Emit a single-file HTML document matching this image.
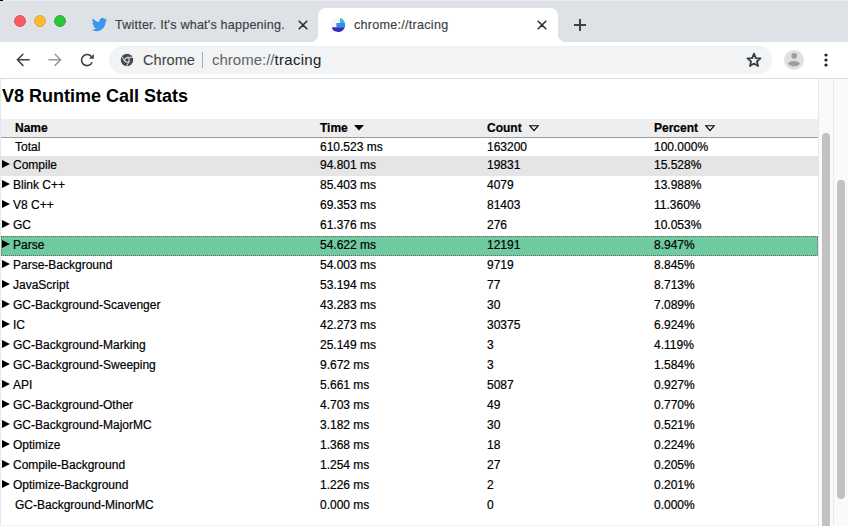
<!DOCTYPE html>
<html><head><meta charset="utf-8">
<style>
*{box-sizing:border-box}
html,body{margin:0;padding:0;width:848px;height:526px;overflow:hidden;background:#fff;font-family:"Liberation Sans",sans-serif}
.abs{position:absolute}
#strip{position:absolute;left:0;top:0;width:848px;height:42px;background:#dee1e6}
.light{position:absolute;width:12px;height:12px;border-radius:50%}
#tab{position:absolute;left:318px;top:8px;width:240px;height:34px;background:#fff;border-radius:8px 8px 0 0}
#tab:before,#tab:after{content:"";position:absolute;bottom:0;width:8px;height:8px}
#tab:before{left:-8px;background:radial-gradient(circle at 0 0,#dee1e6 8px,#fff 8.5px)}
#tab:after{right:-8px;background:radial-gradient(circle at 100% 0,#dee1e6 8px,#fff 8.5px)}
.tabtitle{position:absolute;font-size:12px;color:#3c4043;white-space:nowrap;line-height:14px;-webkit-text-stroke:0.15px #3c4043}
#toolbar{position:absolute;left:0;top:42px;width:848px;height:36px;background:#fff}
#tbline{position:absolute;left:0;top:78px;width:848px;height:1px;background:#dadce0}
#omni{position:absolute;left:109px;top:46px;width:663px;height:28px;border-radius:14px;background:#f1f3f4}
#content{position:absolute;left:0;top:79px;width:848px;height:447px;background:#fff;overflow:hidden}
#lborder{position:absolute;left:0;top:79px;width:1px;height:447px;background:#e6e6e6}
h1{position:absolute;left:2px;top:0;margin:0;font-size:18px;font-weight:bold;line-height:20px;color:#000}
.hdr{position:absolute;left:1px;top:40px;width:817px;height:19px;background:#eeeeee;border-bottom:1px solid #9c9c9c}
.row{position:absolute;left:1px;width:817px;height:20px}
.c{position:absolute;top:0;font-size:12px;line-height:18px;color:#000;white-space:nowrap;-webkit-text-stroke:0.2px #000}
.tri{position:absolute;left:0.5px;top:4px;width:0;height:0;border-top:4px solid transparent;border-bottom:4px solid transparent;border-left:8px solid #000}
.hov{background:#e5e5e5}
.sel{background:#6fcaa0;outline:1px dotted #6a6a6a;outline-offset:-1px}
.sb{position:absolute;top:79px;height:447px;background:#fafafa;border-left:1px solid #e8e8e8}
.thumb{position:absolute;width:8px;background:#c1c1c1;border-radius:4px}
</style></head><body>
<div id="strip"></div>
<div class="abs" style="left:0;top:0;width:848px;height:1px;background:#e9eaee"></div>
<div class="abs" style="left:0;top:0;width:3px;height:1px;background:#000"></div>
<div class="light" style="left:14px;top:15px;background:#f95c61;border:0.5px solid #e5484f;box-shadow:0 0 0 1px #dff0f5"></div>
<div class="light" style="left:34px;top:15px;background:#fbbd2e;border:0.5px solid #e0a226;box-shadow:0 0 0 1px #e2e8f5"></div>
<div class="light" style="left:54px;top:15px;background:#2ac63b;border:0.5px solid #1fae2e;box-shadow:0 0 0 1px #f0e4f2"></div>

<!-- inactive tab -->
<svg class="abs" style="left:91.5px;top:18.3px" width="15.5" height="13.5" viewBox="0 0 24 20" preserveAspectRatio="none"><path fill="#3a95ee" d="M23.6 2.4c-.9.4-1.8.6-2.8.8 1-.6 1.8-1.6 2.1-2.7-.9.6-2 1-3.1 1.2C18.9.6 17.6 0 16.2 0c-2.7 0-4.9 2.2-4.9 4.9 0 .4 0 .8.1 1.1C7.3 5.8 3.7 3.9 1.3.9.9 1.6.6 2.5.6 3.4c0 1.7.9 3.2 2.2 4.1-.8 0-1.6-.2-2.2-.6v.1c0 2.4 1.7 4.4 3.9 4.8-.4.1-.8.2-1.3.2-.3 0-.6 0-.9-.1.6 2 2.4 3.4 4.6 3.4-1.7 1.3-3.8 2.1-6.1 2.1-.4 0-.8 0-1.2-.1 2.2 1.4 4.8 2.2 7.5 2.2 9.1 0 14-7.5 14-14v-.6c1-.7 1.8-1.6 2.5-2.5z"/></svg>
<div class="tabtitle" style="left:115px;top:18px;font-size:12.6px;letter-spacing:0.2px">Twitter. It's what's happening.</div>
<svg class="abs" style="left:297px;top:19px" width="12" height="12" viewBox="0 0 12 12"><path d="M2.2 2.2L9.8 9.8M9.8 2.2L2.2 9.8" stroke="#2e3034" stroke-width="1.6" stroke-linecap="round"/></svg>

<!-- active tab -->
<div id="tab"></div>
<svg class="abs" style="left:330px;top:17px" width="16" height="16" viewBox="0 0 16 16">
<circle cx="8" cy="8" r="7.3" fill="#f5f5f7"/>
<path d="M10 1.1A7.2 7.2 0 0 1 14.9 6H10Z" fill="#27c3d9"/>
<path d="M6.4 6H14.9A7.2 7.2 0 0 1 14.8 10.2H6.4Z" fill="#3b86ef"/>
<path d="M2.3 10.2H14.8A7.2 7.2 0 0 1 2.3 12.2Z" fill="#3030b4"/>
</svg>
<div class="tabtitle" style="left:354px;top:18px;font-size:12.6px;letter-spacing:0.26px">chrome://tracing</div>
<svg class="abs" style="left:536px;top:19px" width="12" height="12" viewBox="0 0 12 12"><path d="M2.2 2.2L9.8 9.8M9.8 2.2L2.2 9.8" stroke="#2e3034" stroke-width="1.6" stroke-linecap="round"/></svg>
<svg class="abs" style="left:573px;top:18px" width="14" height="14" viewBox="0 0 14 14"><path d="M7 1V13M1 7H13" stroke="#3c4043" stroke-width="2"/></svg>

<!-- toolbar -->
<div id="toolbar"></div>
<div id="tbline"></div>
<svg class="abs" style="left:15px;top:52px" width="16" height="16" viewBox="0 0 16 16"><path d="M14.2 7.8H2.6M7.9 2.2L2.4 7.8L7.9 13.4" fill="none" stroke="#3c4043" stroke-width="1.5" stroke-linecap="round"/></svg>
<svg class="abs" style="left:47px;top:52px" width="16" height="16" viewBox="0 0 16 16"><path d="M2 7.8H13.5M8.1 2.2L13.6 7.8L8.1 13.4" fill="none" stroke="#9a9a9a" stroke-width="1.5" stroke-linecap="round"/></svg>
<svg class="abs" style="left:79px;top:52px" width="16" height="16" viewBox="0 0 16 16"><path d="M13.1 10.2A5.5 5.5 0 1 1 12.3 4.6" fill="none" stroke="#3c4043" stroke-width="1.6"/><path d="M14.8 1.9V6.7H10Z" fill="#3c4043"/></svg>

<div id="omni"></div>
<svg class="abs" style="left:120px;top:53px" width="14" height="14" viewBox="0 0 14 14">
<circle cx="7" cy="7" r="6.2" fill="#45484c"/>
<circle cx="7" cy="7" r="2.7" fill="#f1f3f4"/>
<circle cx="7" cy="7" r="1.8" fill="#45484c"/>
<path d="M7 4.3H12.8M4.7 8.4L1.8 3.4M9.3 8.4L6.4 13.3" stroke="#f1f3f4" stroke-width="0.9"/>
</svg>
<div class="abs" style="left:143px;top:51px;font-size:14.6px;line-height:18px;color:#3c4043">Chrome</div>
<div class="abs" style="left:202px;top:52px;width:1px;height:16px;background:#a8abaf"></div>
<div class="abs" style="left:212px;top:51px;font-size:15px;line-height:18px;color:#5f6368;white-space:nowrap">chrome://<span style="color:#202124;letter-spacing:0.3px">tracing</span></div>
<svg class="abs" style="left:746px;top:52px" width="16" height="16" viewBox="0 0 24 24"><path d="M12 2.5l2.7 6.6 7.1.5-5.4 4.6 1.7 6.9L12 17.4l-6.1 3.7 1.7-6.9-5.4-4.6 7.1-.5z" fill="none" stroke="#3c4043" stroke-width="2.7" stroke-linejoin="round"/></svg>
<svg class="abs" style="left:784px;top:50px" width="20" height="20" viewBox="0 0 20 20"><circle cx="10" cy="10" r="10" fill="#e0e0e0"/><circle cx="10.2" cy="5.8" r="2.9" fill="#9e9e9e"/><path d="M3.9 13.4C6.2 10.1 13.8 10.1 16.1 13.4C13.8 17.4 6.2 17.4 3.9 13.4Z" fill="#9e9e9e"/></svg>
<svg class="abs" style="left:822px;top:52px" width="8" height="16" viewBox="0 0 8 16"><circle cx="4" cy="3" r="1.6" fill="#202124"/><circle cx="4" cy="8" r="1.6" fill="#202124"/><circle cx="4" cy="13" r="1.6" fill="#202124"/></svg>

<!-- content -->
<div id="content">
<h1 style="top:7px">V8 Runtime Call Stats</h1>
<div class="hdr">
  <div class="c" style="left:14px;font-weight:bold">Name</div>
  <div class="c" style="left:319px;font-weight:bold">Time</div>
  <svg class="abs" style="left:353px;top:6px" width="10" height="6" viewBox="0 0 10 6"><path d="M0 0H10L5 5.5Z" fill="#000"/></svg>
  <div class="c" style="left:486px;font-weight:bold">Count</div>
  <svg class="abs" style="left:527.5px;top:5.5px" width="10" height="7" viewBox="0 0 10 7"><path d="M0.7 0.7H9.3L5 5.6Z" fill="none" stroke="#000" stroke-width="1.1" stroke-linejoin="miter"/></svg>
  <div class="c" style="left:653px;font-weight:bold">Percent</div>
  <svg class="abs" style="left:703.5px;top:5.5px" width="10" height="7" viewBox="0 0 10 7"><path d="M0.7 0.7H9.3L5 5.6Z" fill="none" stroke="#000" stroke-width="1.1" stroke-linejoin="miter"/></svg>
</div>
<div class="row" style="top:59px;height:18px"><div class="c" style="left:14px">Total</div><div class="c" style="left:319px">610.523 ms</div><div class="c" style="left:486px">163200</div><div class="c" style="left:653px">100.000%</div></div>
<div class="row hov" style="top:77px;height:20px"><div class="tri"></div><div class="c" style="left:12px">Compile</div><div class="c" style="left:319px">94.801 ms</div><div class="c" style="left:486px">19831</div><div class="c" style="left:653px">15.528%</div></div>
<div class="row" style="top:97px;height:20px"><div class="tri"></div><div class="c" style="left:12px">Blink C++</div><div class="c" style="left:319px">85.403 ms</div><div class="c" style="left:486px">4079</div><div class="c" style="left:653px">13.988%</div></div>
<div class="row" style="top:117px;height:20px"><div class="tri"></div><div class="c" style="left:12px">V8 C++</div><div class="c" style="left:319px">69.353 ms</div><div class="c" style="left:486px">81403</div><div class="c" style="left:653px">11.360%</div></div>
<div class="row" style="top:137px;height:20px"><div class="tri"></div><div class="c" style="left:12px">GC</div><div class="c" style="left:319px">61.376 ms</div><div class="c" style="left:486px">276</div><div class="c" style="left:653px">10.053%</div></div>
<div class="row sel" style="top:157px;height:20px"><div class="tri"></div><div class="c" style="left:12px">Parse</div><div class="c" style="left:319px">54.622 ms</div><div class="c" style="left:486px">12191</div><div class="c" style="left:653px">8.947%</div></div>
<div class="row" style="top:177px;height:20px"><div class="tri"></div><div class="c" style="left:12px">Parse-Background</div><div class="c" style="left:319px">54.003 ms</div><div class="c" style="left:486px">9719</div><div class="c" style="left:653px">8.845%</div></div>
<div class="row" style="top:197px;height:20px"><div class="tri"></div><div class="c" style="left:12px">JavaScript</div><div class="c" style="left:319px">53.194 ms</div><div class="c" style="left:486px">77</div><div class="c" style="left:653px">8.713%</div></div>
<div class="row" style="top:217px;height:20px"><div class="tri"></div><div class="c" style="left:12px">GC-Background-Scavenger</div><div class="c" style="left:319px">43.283 ms</div><div class="c" style="left:486px">30</div><div class="c" style="left:653px">7.089%</div></div>
<div class="row" style="top:237px;height:20px"><div class="tri"></div><div class="c" style="left:12px">IC</div><div class="c" style="left:319px">42.273 ms</div><div class="c" style="left:486px">30375</div><div class="c" style="left:653px">6.924%</div></div>
<div class="row" style="top:257px;height:20px"><div class="tri"></div><div class="c" style="left:12px">GC-Background-Marking</div><div class="c" style="left:319px">25.149 ms</div><div class="c" style="left:486px">3</div><div class="c" style="left:653px">4.119%</div></div>
<div class="row" style="top:277px;height:20px"><div class="tri"></div><div class="c" style="left:12px">GC-Background-Sweeping</div><div class="c" style="left:319px">9.672 ms</div><div class="c" style="left:486px">3</div><div class="c" style="left:653px">1.584%</div></div>
<div class="row" style="top:297px;height:20px"><div class="tri"></div><div class="c" style="left:12px">API</div><div class="c" style="left:319px">5.661 ms</div><div class="c" style="left:486px">5087</div><div class="c" style="left:653px">0.927%</div></div>
<div class="row" style="top:317px;height:20px"><div class="tri"></div><div class="c" style="left:12px">GC-Background-Other</div><div class="c" style="left:319px">4.703 ms</div><div class="c" style="left:486px">49</div><div class="c" style="left:653px">0.770%</div></div>
<div class="row" style="top:337px;height:20px"><div class="tri"></div><div class="c" style="left:12px">GC-Background-MajorMC</div><div class="c" style="left:319px">3.182 ms</div><div class="c" style="left:486px">30</div><div class="c" style="left:653px">0.521%</div></div>
<div class="row" style="top:357px;height:20px"><div class="tri"></div><div class="c" style="left:12px">Optimize</div><div class="c" style="left:319px">1.368 ms</div><div class="c" style="left:486px">18</div><div class="c" style="left:653px">0.224%</div></div>
<div class="row" style="top:377px;height:20px"><div class="tri"></div><div class="c" style="left:12px">Compile-Background</div><div class="c" style="left:319px">1.254 ms</div><div class="c" style="left:486px">27</div><div class="c" style="left:653px">0.205%</div></div>
<div class="row" style="top:397px;height:20px"><div class="tri"></div><div class="c" style="left:12px">Optimize-Background</div><div class="c" style="left:319px">1.226 ms</div><div class="c" style="left:486px">2</div><div class="c" style="left:653px">0.201%</div></div>
<div class="row" style="top:417px;height:20px"><div class="c" style="left:14px">GC-Background-MinorMC</div><div class="c" style="left:319px">0.000 ms</div><div class="c" style="left:486px">0</div><div class="c" style="left:653px">0.000%</div></div>
</div>
<div id="lborder"></div>
<div class="abs" style="left:0;top:525px;width:848px;height:1px;background:#f0f0f0"></div>
<div class="sb" style="left:818px;width:15px"></div>
<div class="sb" style="left:833px;width:15px"></div>
<div class="thumb" style="left:822px;top:133px;height:400px"></div>
<div class="thumb" style="left:837px;top:180px;height:319px"></div>
</body></html>
